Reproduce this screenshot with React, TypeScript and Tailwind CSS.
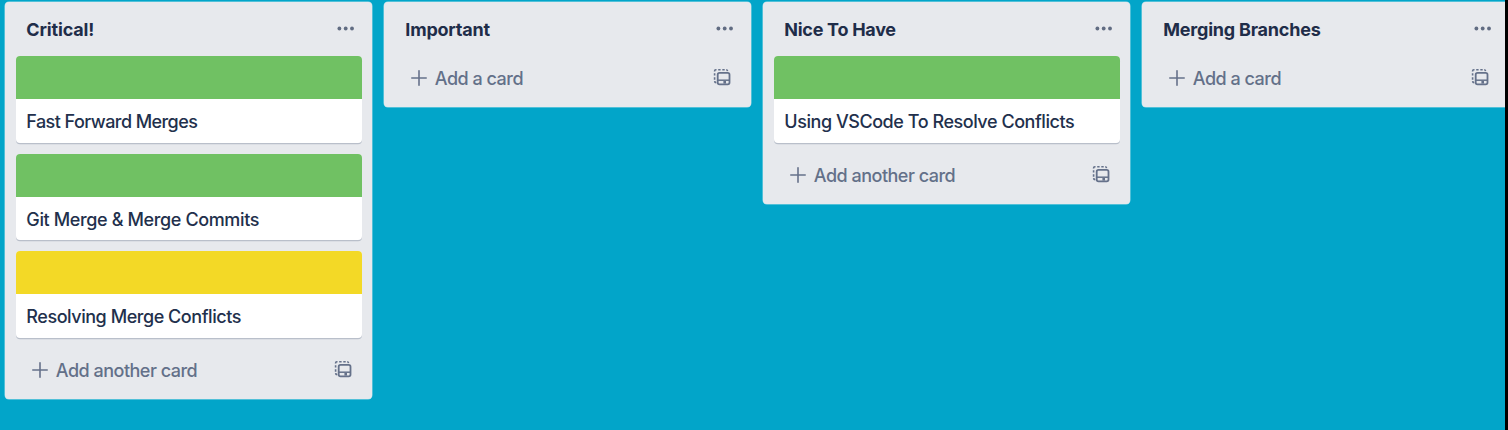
import React from "react";

type Card = { title: string; cover: string; tracking: string };
type List = { title: string; tracking: string; cards: Card[] };

const GREEN = "bg-[#70c163]";
const YELLOW = "bg-[#f3d926]";

const lists: List[] = [
  {
    title: "Critical!",
    tracking: "tracking-[-0.15px]",
    cards: [
      { title: "Fast Forward Merges", cover: GREEN, tracking: "tracking-[-0.56px]" },
      { title: "Git Merge & Merge Commits", cover: GREEN, tracking: "tracking-[-0.37px]" },
      { title: "Resolving Merge Conflicts", cover: YELLOW, tracking: "tracking-[-0.45px]" },
    ],
  },
  { title: "Important", tracking: "tracking-[-0.2px]", cards: [] },
  {
    title: "Nice To Have",
    tracking: "tracking-[-0.28px]",
    cards: [{ title: "Using VSCode To Resolve Conflicts", cover: GREEN, tracking: "tracking-[-0.45px]" }],
  },
  { title: "Merging Branches", tracking: "tracking-[-0.22px]", cards: [] },
];

function MoreIcon() {
  return (
    <svg width="18" height="6" viewBox="0 0 18 6" fill="#616c82">
      <circle cx="2.4" cy="2.5" r="1.9" />
      <circle cx="8.7" cy="2.5" r="1.9" />
      <circle cx="15" cy="2.5" r="1.9" />
    </svg>
  );
}

function PlusIcon() {
  return (
    <svg width="16" height="16" viewBox="0 0 16 16" fill="none" stroke="#66718a" strokeWidth="1.6" strokeLinecap="round">
      <path d="M8 0.8V15.2M0.8 8H15.2" />
    </svg>
  );
}

function TemplateIcon() {
  return (
    <svg width="18" height="18" viewBox="0 0.9 18 18" fill="none" stroke="#65718a" strokeWidth="1.8">
      <rect x="4.7" y="4.8" width="11.8" height="11.4" rx="1.8" />
      <path d="M4.7 12.1H16.5" strokeWidth="1.5" />
      <path d="M10.4 14.2H13" strokeWidth="2.6" />
      <path d="M1.6 3.4V2.9Q1.6 1.7 2.8 1.7H3.5M5.2 1.7H7.6M9.3 1.7H11.7M13.2 1.7Q14.3 1.7 14.6 3M1.6 5.1V7.5M1.6 9.2V11.6M1.6 13Q1.7 14.5 3.3 14.6" strokeWidth="1.6" />
    </svg>
  );
}

function BoardCard({ card }: { card: Card }) {
  return (
    <article className="h-[86.5px] overflow-hidden rounded-[4px] bg-white shadow-[0_1.3px_0_#b9bfca]">
      <div className={`h-[43px] ${card.cover}`} />
      <p className={`px-[10.5px] pt-[9px] leading-[28px] whitespace-nowrap text-[#22304c] ${card.tracking}`}>{card.title}</p>
    </article>
  );
}

function BoardList({ list }: { list: List }) {
  const empty = list.cards.length === 0;
  return (
    <section className="w-[367.5px] shrink-0 rounded-[4px] bg-[#e7e9ed] pr-[10.5px] pl-[11px] shadow-[0_0_0_0.5px_#9fdbe8]">
      <header className="flex h-[54px] items-center justify-between pr-[7px] pl-[10.5px]">
        <h2 className={`font-bold text-[#1f2d49] ${list.tracking}`}>{list.title}</h2>
        <MoreIcon />
      </header>
      <div className="flex flex-col gap-[11px]">
        {list.cards.map((card) => (
          <BoardCard key={card.title} card={card} />
        ))}
      </div>
      <footer className={`flex items-center justify-between pr-[10px] pl-4 text-[#637089] ${empty ? "h-[51px] pb-[7px]" : "h-[61px] pt-[4px]"}`}>
        <span className="flex items-center gap-[8px]">
          <PlusIcon />
          <span className="tracking-[-0.5px]">{empty ? "Add a card" : "Add another card"}</span>
        </span>
        <TemplateIcon />
      </footer>
    </section>
  );
}

export default function App() {
  return (
    <div className="flex h-[430px] w-[1508px] bg-black font-[Inter,sans-serif] text-[18px] font-[450]">
      <main className="flex w-[1505px] items-start gap-[11.5px] overflow-hidden bg-[#02a5c9] pt-[2px] pl-[4.8px]">
        {lists.map((list) => (
          <BoardList key={list.title} list={list} />
        ))}
      </main>
    </div>
  );
}
